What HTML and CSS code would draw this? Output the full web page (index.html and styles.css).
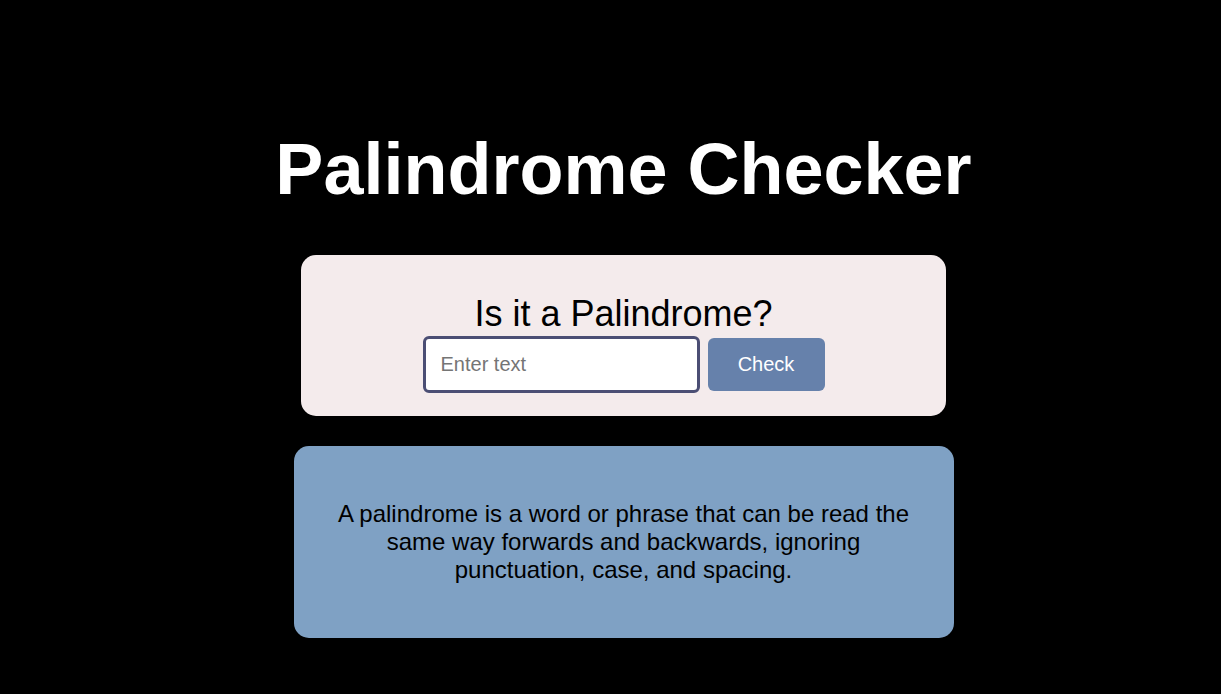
FILE: index.html
```html
<!DOCTYPE html>
<html lang="en">
<head>
<meta charset="utf-8">
<title>Palindrome Checker</title>
<link rel="stylesheet" href="styles.css">
</head>
<body>
<main class="page">
  <h1 class="title">Palindrome Checker</h1>
  <section class="checker">
    <label class="checker-label" for="text-input">Is it a Palindrome?</label>
    <div class="checker-row">
      <input id="text-input" class="checker-input" type="text" placeholder="Enter text">
      <button class="checker-btn" type="button">Check</button>
    </div>
  </section>
  <section class="info">
    <p class="info-text">A palindrome is a word or phrase that can be read the same way forwards and backwards, ignoring punctuation, case, and spacing.</p>
  </section>
</main>
</body>
</html>
```
FILE: styles.css
```css
* { box-sizing: border-box; }
html, body { margin: 0; padding: 0; background: #000; }
body {
  font-family: "Liberation Sans", Arial, sans-serif;
  color: #000;
  min-height: 694px;
  padding-left: 26px;
}
.page {
  display: flex;
  flex-direction: column;
  align-items: center;
  padding-top: 128px;
}
.title {
  margin: 0;
  font-size: 72px;
  font-weight: bold;
  line-height: 83px;
  color: #fff;
}
.checker {
  margin-top: 44px;
  width: 645px;
  height: 161px;
  background: #f4ebec;
  border-radius: 15px;
  display: flex;
  flex-direction: column;
  align-items: center;
  padding-top: 38px;
}
.checker-label {
  font-size: 36px;
  line-height: 41px;
  margin-bottom: 2px;
}
.checker-row {
  display: flex;
  align-items: center;
  gap: 8px;
}
.checker-input {
  width: 277px;
  height: 57px;
  border: 3px solid #4b4e74;
  border-radius: 6px;
  background: #fff;
  padding: 0 15px;
  font-family: "Liberation Sans", Arial, sans-serif;
  font-size: 20px;
  color: #000;
  outline: none;
}
.checker-input::placeholder { color: #757575; }
.checker-btn {
  width: 117px;
  height: 53px;
  border: none;
  border-radius: 6px;
  background: #6681ab;
  color: #fff;
  font-family: "Liberation Sans", Arial, sans-serif;
  font-size: 20px;
  cursor: pointer;
}
.info {
  margin-top: 30px;
  width: 660px;
  height: 192px;
  background: #7fa1c4;
  border-radius: 15px;
  display: flex;
  align-items: center;
  justify-content: center;
  padding: 0 36px;
}
.info-text {
  margin: 0;
  text-align: center;
  font-size: 24px;
  line-height: 28px;
}
```
